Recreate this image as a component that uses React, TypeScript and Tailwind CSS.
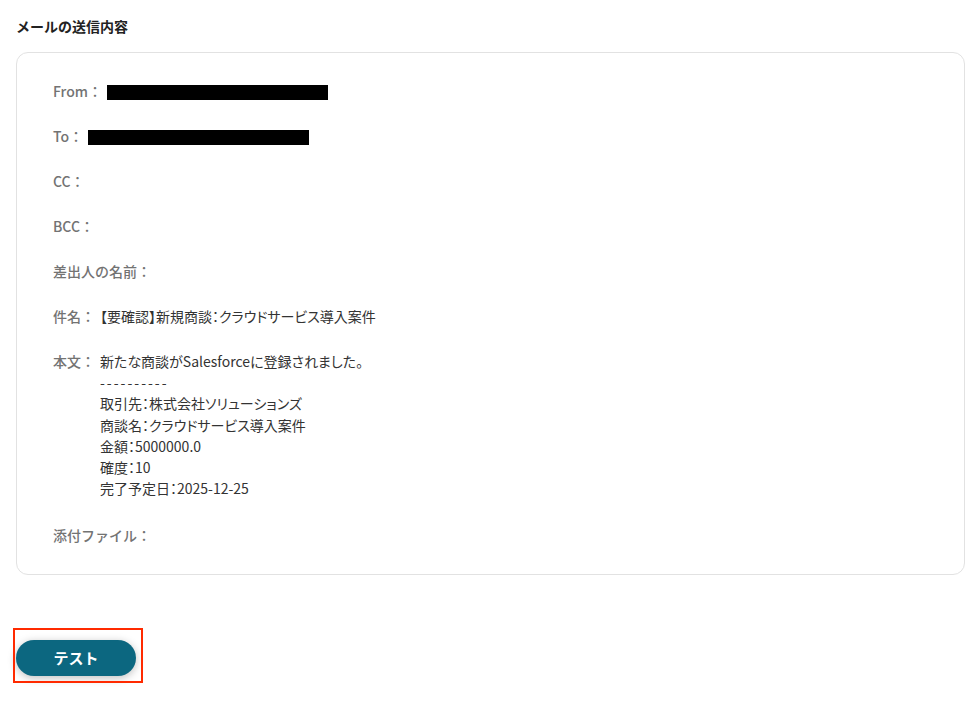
const rows = [
  { label: "From", redact: true },
  { label: "To", redact: true },
  { label: "CC" },
  { label: "BCC" },
  { label: "差出人の名前" },
  { label: "件名", value: ["【要確認】新規商談：クラウドサービス導入案件"] },
  {
    label: "本文",
    value: [
      "新たな商談がSalesforceに登録されました。",
      "----------",
      "取引先：株式会社ソリューションズ",
      "商談名：クラウドサービス導入案件",
      "金額：5000000.0",
      "確度：10",
      "完了予定日：2025-12-25",
    ],
  },
  { label: "添付ファイル" },
];

export default function App() {
  return (
    <div
      className="min-h-screen bg-white px-4 pt-4 text-[14px] text-[#333]"
      style={{ fontFamily: '"Noto Sans CJK JP", "Noto Sans", sans-serif' }}
    >
      <h2 className="mb-4 text-[14px] font-bold leading-5 text-[#222]">メールの送信内容</h2>
      <div className="w-[949px] rounded-xl border border-[#e2e2e2] pb-[28px] pl-[36px] pt-7">
        <div className="flex flex-col gap-6">
          {rows.map((r) => (
            <div key={r.label} className="flex items-start gap-[5px] leading-[21px]">
              <span className="font-medium text-[#737373]">{r.label}：</span>
              {r.redact && <span className="mt-[4px] inline-block h-[15px] w-[221px] bg-black" />}
              {r.value && (
                <div
                  className={
                    r.value.length > 1
                      ? "mb-[2px] flex flex-col leading-[21.2px] [font-feature-settings:'palt']"
                      : "flex flex-col [font-feature-settings:'palt']"
                  }
                >
                  {r.value.map((line, i) =>
                    line.startsWith("---") ? (
                      <span key={i} className="tracking-[2px]">{line}</span>
                    ) : (
                      <span key={i}>{line}</span>
                    ),
                  )}
                </div>
              )}
            </div>
          ))}
        </div>
      </div>
      <div className="mt-[65px]">
        <div className="relative inline-block">
          <button className="h-9 w-[120px] rounded-full bg-[#0c6780] text-[15px] font-bold text-white shadow-[0_2px_8px_rgba(0,0,0,0.25)]">
            テスト
          </button>
          <div className="pointer-events-none absolute -bottom-[7px] -left-[3px] -right-[7px] -top-[12px] border-2 border-[#ff2a00]" />
        </div>
      </div>
    </div>
  );
}
